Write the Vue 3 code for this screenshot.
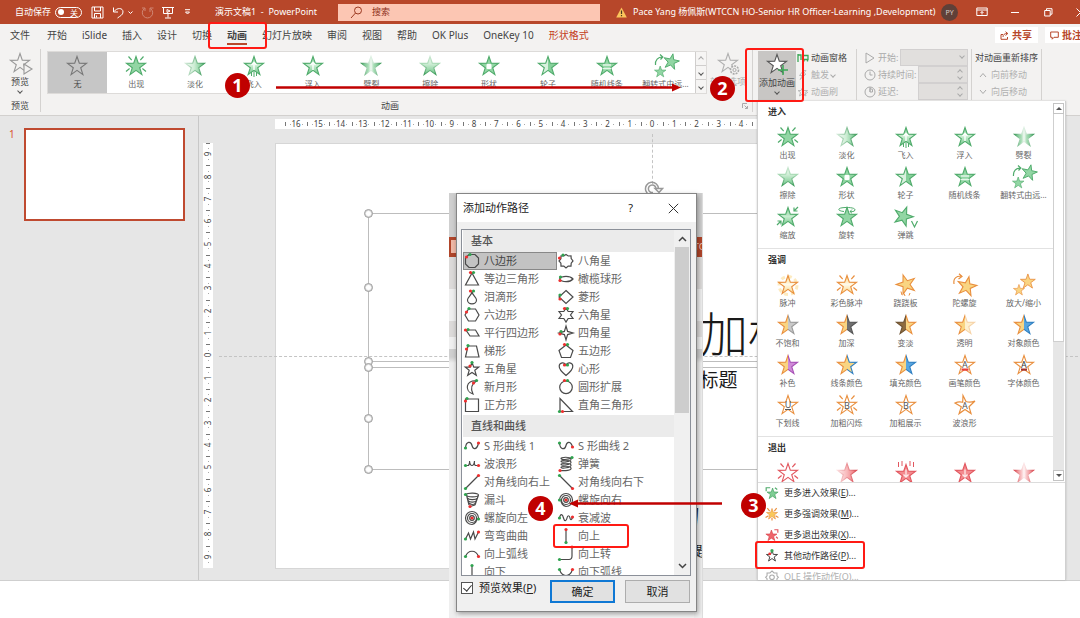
<script setup>
import { h, ref } from 'vue'

const GREEN = '#4fab6b'
const GFILL = '#92d6a4'
const ORANGE = '#e98f3e'
const OFILL = '#f9d582'
const RED = '#e2575f'
const RFILL = '#f38b8f'
const STAR = 'M12 2.5L14.3 9.3L21.5 9.4L15.7 13.7L17.9 20.6L12 16.4L6.1 20.6L8.3 13.7L2.5 9.4L9.7 9.3Z'

const gradients = [
  { id: 'g-fade', x2: 1, y2: 0, stops: [[0, '#f2faf4'], [0.45, '#cfeed6'], [1, '#5fbf7c']] },
  { id: 'g-fade-line', x2: 1, y2: 0, stops: [[0, '#cfe8d5'], [1, '#3f9c5c']] },
  { id: 'g-rise', x2: 0, y2: 1, stops: [[0, '#7fcd94'], [0.5, '#c9edd1'], [1, '#6cc485']] },
  { id: 'g-split', x2: 1, y2: 0, stops: [[0, '#5fbf7c'], [0.35, '#a5dcb3'], [0.5, '#f4faf5'], [0.65, '#a5dcb3'], [1, '#5fbf7c']] },
  { id: 'g-split-line', x2: 1, y2: 0, stops: [[0, '#3f9c5c'], [0.45, '#dcefe1'], [0.55, '#dcefe1'], [1, '#3f9c5c']] },
  { id: 'g-wipe', x2: 0, y2: 1, stops: [[0, '#eaf6ed'], [0.4, '#cfeed6'], [1, '#6cc485']] },
  { id: 'g-wipe-line', x2: 0, y2: 1, stops: [[0, '#c9e6d0'], [0.4, '#a5d8b2'], [1, '#3f9c5c']] },
  { id: 'g-wheel', x2: 1, y2: 0, stops: [[0, '#d9f1df'], [0.5, '#d9f1df'], [0.5, '#85d09a'], [1, '#85d09a']] },
  { id: 'o-glow', x2: 0, y2: 1, stops: [[0, '#f9d582'], [0.5, '#fffaea'], [1, '#f9d582']] },
  { id: 'o-grey', x2: 1, y2: 0, stops: [[0, OFILL], [0.5, OFILL], [0.5, '#c9c9c9'], [1, '#c9c9c9']] },
  { id: 'o-grey-line', x2: 1, y2: 0, stops: [[0, ORANGE], [0.5, ORANGE], [0.5, '#999'], [1, '#999']] },
  { id: 'o-dark', x2: 1, y2: 0, stops: [[0, OFILL], [0.5, OFILL], [0.5, '#707070'], [1, '#707070']] },
  { id: 'o-dark-line', x2: 1, y2: 0, stops: [[0, ORANGE], [0.5, ORANGE], [0.5, '#555'], [1, '#555']] },
  { id: 'o-brown', x2: 1, y2: 0, stops: [[0, '#8f6c3e'], [0.5, '#8f6c3e'], [0.5, OFILL], [1, OFILL]] },
  { id: 'o-brown-line', x2: 1, y2: 0, stops: [[0, '#6d5130'], [0.5, '#6d5130'], [0.5, ORANGE], [1, ORANGE]] },
  { id: 'o-clear', x2: 1, y2: 0, stops: [[0, OFILL], [0.5, OFILL], [0.5, '#fdf0cf'], [1, '#fdf0cf']] },
  { id: 'o-clear-line', x2: 1, y2: 0, stops: [[0, ORANGE], [0.5, ORANGE], [0.5, '#f6d3a8'], [1, '#f6d3a8']] },
  { id: 'o-blue', x2: 1, y2: 0, stops: [[0, OFILL], [0.5, OFILL], [0.5, '#58a6e0'], [1, '#58a6e0']] },
  { id: 'o-blue-line', x2: 1, y2: 0, stops: [[0, ORANGE], [0.5, ORANGE], [0.5, '#2f7fc1'], [1, '#2f7fc1']] },
  { id: 'o-violet', x2: 1, y2: 0, stops: [[0, OFILL], [0.5, OFILL], [0.5, '#cf8ad8'], [1, '#cf8ad8']] },
  { id: 'o-violet-line', x2: 1, y2: 0, stops: [[0, ORANGE], [0.5, ORANGE], [0.5, '#a64fb5'], [1, '#a64fb5']] },
  { id: 'r-fade', x2: 1, y2: 0, stops: [[0, '#fdeeee'], [0.5, '#f8b9bb'], [1, '#ee6c72']] },
  { id: 'r-fade-line', x2: 1, y2: 0, stops: [[0, '#fbdcdd'], [1, '#d94b53']] },
  { id: 'r-split', x2: 1, y2: 0, stops: [[0, '#ee6c72'], [0.35, '#f8c0c2'], [0.5, '#fff6f6'], [0.65, '#f8c0c2'], [1, '#ee6c72']] },
  { id: 'r-split-line', x2: 1, y2: 0, stops: [[0, '#d94b53'], [0.45, '#fbe3e4'], [0.55, '#fbe3e4'], [1, '#d94b53']] },
]

const star = (fill, stroke, transform) =>
  ['path', { d: STAR, fill, stroke, transform, 'stroke-width': 1.1, 'stroke-linejoin': 'miter' }]
const line = (d, stroke, width = 1.2) =>
  ['path', { d, fill: 'none', stroke, 'stroke-width': width }]
const letter = (t, fill = '#555', y = 16) =>
  ['text', { x: 12, y, 'text-anchor': 'middle', 'font-size': 9, 'font-family': 'Noto Sans, sans-serif', fill }, t]

const RAYS = 'M4.5 2.5l3.2 3.6M19.5 2.5l-3.2 3.6M2 17.5l3.6-3M22 17.5l-3.6-3'
const UP = 'M12 16V8.5M9.5 11L12 8.5L14.5 11'
const DOWN = 'M12 8.500V16M9.500 13.500L12 16L14.500 13.500'

const icons = {
  none: [star('none', '#777')],
  appear: [star(GFILL, GREEN), line(RAYS, GREEN)],
  fade: [star('url(#g-fade)', 'url(#g-fade-line)')],
  flyin: [star('url(#g-rise)', GREEN), line(UP, '#fff', 1.4), line('M9.500 18v4M12 17v6M14.500 18v4', GREEN, 1)],
  floatin: [star('url(#g-rise)', GREEN), line(UP, '#fff', 1.4)],
  split: [star('url(#g-split)', 'url(#g-split-line)')],
  wipe: [star('url(#g-wipe)', 'url(#g-wipe-line)')],
  shape: [star(GFILL, GREEN), ['rect', { x: 9.5, y: 10, width: 5, height: 5, rx: 1, fill: '#fff' }]],
  wheel: [star('url(#g-wheel)', GREEN)],
  bars: [star(GFILL, GREEN), line('M8 11h8M8 14.500h8', '#e4f5e8', 1.3)],
  growturn: [
    star(GFILL, GREEN, 'translate(7 -2) rotate(12 12 12) scale(.82)'),
    star(GFILL, GREEN, 'translate(-1 10.500) scale(.6)'),
    line('M1.500 11C1 6 4 3 8.500 3M6 .5L8.800 3L6.500 5.500', GREEN),
  ],
  zoom: [star('url(#g-rise)', GREEN), line('M22 2l-4 4M18 2.500V6h3.500M1 20l4-4M1.500 16H5v3.500', GREEN)],
  swivel: [star(GFILL, GREEN), line('M9 6.500C3 6 2 3.500 7 2.800S20 2.500 20 4.800S16 6.500 15 6.500M17 4.500L15 6.500l2 1.800', GREEN, 1)],
  bounce: [star(GFILL, GREEN, 'translate(-2.500 -1) rotate(20 12 12)'), line('M17.500 16l3 6l3-6', GREEN)],
  pulse: [
    ['circle', { cx: 12, cy: 12.5, r: 9, fill: 'none', stroke: '#fdebc0', 'stroke-width': 3, 'stroke-dasharray': '4 3' }],
    star('url(#o-glow)', ORANGE),
  ],
  colorpulse: [star('url(#o-glow)', ORANGE), line(RAYS, ORANGE)],
  teeter: [star(OFILL, ORANGE, 'translate(0 -1) rotate(-18 12 12)'), line('M7 18.500l1 3.500M10 20.500l1 2.500M16 20l-1 2.500', ORANGE, 1)],
  spin: [star(OFILL, ORANGE, 'translate(2 1) rotate(12 12 12)'), line('M1 11C0 5 4 2.500 9 3.500M6 .8L9 3.500L5.500 6', ORANGE)],
  grow: [star(OFILL, ORANGE, 'translate(6.500 -1) scale(.78)'), star(OFILL, ORANGE, 'translate(0 10) scale(.58)')],
  desaturate: [star('url(#o-grey)', 'url(#o-grey-line)')],
  darken: [star('url(#o-dark)', 'url(#o-dark-line)')],
  lighten: [star('url(#o-brown)', 'url(#o-brown-line)')],
  transparent: [star('url(#o-clear)', 'url(#o-clear-line)')],
  objcolor: [star('url(#o-blue)', 'url(#o-blue-line)')],
  complement: [star('url(#o-violet)', 'url(#o-violet-line)')],
  linecolor: [star(OFILL, 'url(#o-blue-line)')],
  brush: [star('none', ORANGE), letter('A', '#555', 15), ['rect', { x: 8.5, y: 15.5, width: 7, height: 2.2, fill: '#e8403a' }]],
  fontcolor: [star('none', ORANGE), letter('A', '#333', 15), ['rect', { x: 9, y: 15.5, width: 6, height: 2.2, fill: '#a5332c' }]],
  underline: [star('none', ORANGE), letter('U', '#555', 14.5), line('M9 16.500h6', '#555', 1)],
  boldflash: [star('none', ORANGE), line(RAYS, ORANGE), letter('B')],
  boldshow: [star('none', ORANGE), letter('B')],
  wave: [line('M10 2.500L13 8.500Q17 10 22 8L16 13.700L18 20.600L12 16.400L6.100 20.600L8.300 13.700L2 10Q6 8 9.700 9.300Z', ORANGE), letter('A')],
  vanish: [star('none', RED), line(RAYS, RED)],
  rfade: [star('url(#r-fade)', 'url(#r-fade-line)')],
  flyout: [star(RFILL, RED, 'translate(0 1)'), line(DOWN, '#fdeaea', 1.3), line('M4.500 1v5M8 0v5M16 0v5M19.500 1v5', RED, 1)],
  floatout: [star(RFILL, RED), line(DOWN, '#fdeaea', 1.3)],
  rsplit: [star('url(#r-split)', 'url(#r-split-line)')],
  moreIn: [star('#7fcd94', '#3f9c5c', 'translate(1 1)'), line('M2 9V3h7M17 3l4 3', GREEN, 2)],
  moreEmph: [star('#f9c95a', ORANGE), line('M4 2l4 5M20 2l-4 5M1 18l5-3M23 18l-5-3M12 19v4', ORANGE, 2)],
  moreOut: [star('#f0646b', '#d6414a', 'translate(-1 1)'), line('M16 3h6v5M19 15l3 3', RED, 2)],
  path: [
    ['path', { d: STAR, fill: 'none', stroke: '#444', 'stroke-width': 1.7 }],
    ['circle', { cx: 12, cy: 3, r: 2.8, fill: '#3aa655' }],
    ['circle', { cx: 8, cy: 8.5, r: 2.4, fill: '#e33' }],
  ],
  gear: [line('M12 1.500l3.500 3.500h5v5l2.500 2.500-2.500 2.500v5h-5L12 23l-3.500-3h-5v-5L1 12.500l2.500-2.500v-5h5z', '#aaa', 1.8), ['circle', { cx: 12, cy: 12.5, r: 4, fill: 'none', stroke: '#aaa', 'stroke-width': 1.8 }]],
  preview: [star('none', '#999'), ['path', { d: 'M16 13l8 5l-8 5z', fill: '#f3f2f1', stroke: '#999', 'stroke-width': 1.1 }]],
  options: [star('none', '#b0b0b0'), ['circle', { cx: 18.5, cy: 19, r: 4, fill: '#f3f2f1', stroke: '#aaa', 'stroke-width': 1.6, 'stroke-dasharray': '2 1' }], ['circle', { cx: 18.5, cy: 19, r: 1.6, fill: 'none', stroke: '#aaa' }]],
  add: [star('#fff', '#555'), line('M18 13v10M13 18h10', '#3aa655', 1.5)],
}

const EffectIcon = (props) =>
  h('svg', { viewBox: '0 0 24 24', 'aria-hidden': 'true', overflow: 'visible' },
    icons[props.name].map(([tag, attrs, text]) => h(tag, attrs, text)))
EffectIcon.props = ['name']

const tabs = ['文件', '开始', 'iSlide', '插入', '设计', '切换', '动画', '幻灯片放映', '审阅', '视图', '帮助', 'OK Plus', 'OneKey 10', '形状格式']

const entrance = [
  ['appear', '出现'], ['fade', '淡化'], ['flyin', '飞入'], ['floatin', '浮入'], ['split', '劈裂'],
  ['wipe', '擦除'], ['shape', '形状'], ['wheel', '轮子'], ['bars', '随机线条'], ['growturn', '翻转式由远...'],
  ['zoom', '缩放'], ['swivel', '旋转'], ['bounce', '弹跳'],
]
const gallery = [['none', '无'], ...entrance.slice(0, 10)]
const sections = [
  { title: '进入', items: entrance },
  {
    title: '强调',
    items: [
      ['pulse', '脉冲'], ['colorpulse', '彩色脉冲'], ['teeter', '跷跷板'], ['spin', '陀螺旋'], ['grow', '放大/缩小'],
      ['desaturate', '不饱和'], ['darken', '加深'], ['lighten', '变淡'], ['transparent', '透明'], ['objcolor', '对象颜色'],
      ['complement', '补色'], ['linecolor', '线条颜色'], ['objcolor', '填充颜色'], ['brush', '画笔颜色'], ['fontcolor', '字体颜色'],
      ['underline', '下划线'], ['boldflash', '加粗闪烁'], ['boldshow', '加粗展示'], ['wave', '波浪形'],
    ],
  },
  { title: '退出', items: [['vanish', ''], ['rfade', ''], ['flyout', ''], ['floatout', ''], ['rsplit', '']] },
]
const moreItems = [
  ['moreIn', '更多进入效果', 'E'],
  ['moreEmph', '更多强调效果', 'M'],
  ['moreOut', '更多退出效果', 'X'],
  ['path', '其他动作路径', 'P'],
  ['gear', 'OLE 操作动作', 'O'],
]

const hTicks = Array.from({ length: 33 }, (_, i) => Math.abs(i - 16))
const vTicks = Array.from({ length: 19 }, (_, i) => Math.abs(i - 9))

const basic = [
  ['八边形', 'M5 1.500h6L14.500 5v6L11 14.500H5L1.500 11V5Z', [6, 1.5], [2.5, 4]],
  ['八角星', 'M8 1.500l2.200 1.500 2.800-.2.200 2.800L15 8l-1.800 2.200-.2 2.900-2.800-.1L8 15l-2.200-2-2.800.1-.1-2.900L1 8l1.900-2.300.1-2.900 2.800.2z', [5, 2], [1.5, 5]],
  ['等边三角形', 'M8 2L14.500 14H1.500Z', [9.5, 1.5], [6.5, 1.5]],
  ['橄榄球形', 'M1.500 8C4 4.500 12 4.500 15 8C12 11.500 4 11.500 1.500 8Z', [2.5, 6], [2, 9.5]],
  ['泪滴形', 'M8 2.500C8 6 3.500 8 3.500 11a4.500 3.800 0 0 0 9 0C12.500 8 8 6 8 2.500Z', [9.5, 2], [6.5, 2]],
  ['菱形', 'M8 1.500L15 8L8 14.500L1 8Z', [2, 6], [2, 10]],
  ['六边形', 'M4.500 2h7L15 8l-3.500 6h-7L1 8Z', [5, 1.5], [2.5, 5]],
  ['六角星', 'M8 1l2.200 3.500H15L12.500 8l2.500 3.500h-4.800L8 15l-2.200-3.500H1L3.500 8L1 4.500h4.800Z', [9.5, 1.5], [6.5, 1.5]],
  ['平行四边形', 'M2 5h9.500L15 11H6Z', [4, 4.5], [1.5, 5]],
  ['四角星', 'M8 1l1.600 5.400L15 8l-5.400 1.600L8 15l-1.600-5.400L1 8l5.400-1.600Z', [3, 6.5], [2, 9]],
  ['梯形', 'M4 3h8.500l2.500 11H1.500Z', [4, 2.5], [2.5, 6]],
  ['五边形', 'M8 2l7 5.500-2.500 7h-9L1 7.500Z', [9.5, 1.5], [6.5, 1.5]],
  ['五角星', 'M8 1.500l1.800 4.700h4.900l-3.900 3.100 1.500 5L8 11.500l-4.300 2.800 1.500-5L1.300 6.200h4.900Z', [8, 1.5], [6, 5]],
  ['心形', 'M8 14.500C3 10.500 1 8 1.200 5C1.500 1.500 6.500.5 8 4C9.500.5 14.500 1.500 14.800 5C15 8 13 10.500 8 14.500Z', [9.5, 4], [6.5, 4]],
  ['新月形', 'M12.500 2C2 .5 0 12 9 15C6.500 10 7.500 5 12.500 2Z', [12.5, 1.5], [9.5, 4]],
  ['圆形扩展', 'M8 2a6.300 6.300 0 1 1 0 12.600A6.300 6.300 0 0 1 8 2Z', [9.5, 1.5], [6.5, 1.5]],
  ['正方形', 'M1.500 2h13v12.500h-13Z', [3, 1.5], [1.5, 4]],
  ['直角三角形', 'M2 1.500V14.500H14.500Z', [1.5, 14.5], [4.5, 14.5]],
]
const curves = [
  ['S 形曲线 1', 'M1.500 10C2 3 7 3 8 7.500S13 12 14.500 5', [1.5, 10], [14.500, 5]],
  ['S 形曲线 2', 'M1.500 5C2 12 7 12 8 7.500S13 3 14.500 9', [1.5, 5], [14.5, 9]],
  ['波浪形', 'M1.500 9.500H4.500Q6 8 5.500 5Q6 9.500 8 9.500T10.500 5Q10 9 11.500 9.500H14.500', [1.5, 9.5], [14.5, 9.5]],
  ['弹簧', 'M14 1.500C10 4 3 4 3 2.500S12 .5 13 3S3 7 3 5.500S12 3.500 13 6S3 10 3 8.500S12 6.500 13 9S3 13 3 11.500S12 9.500 13 12S7 15 2 14.500', [14, 1.5], [2, 14.5]],
  ['对角线向右上', 'M1.500 14.500L14.500 1.500', [1.5, 14.5], [14.5, 1.5]],
  ['对角线向右下', 'M1.500 1.500L14.500 14.500', [1.5, 1.5], [14.5, 14.5]],
  ['漏斗', 'M1.500 2.500C4 .5 14 .5 14.500 3C14 5.500 3 5.500 2.500 3L5 13M14.500 3L11 13M3.500 6C5 8.500 12 8 13.500 6M4 8.500C6 11 11 10.500 12.500 8.500M5 11C7 13 10 13 11.500 11M11 13L6 14.500', [1.5, 2.5], [6, 14.5]],
  ['螺旋向右', 'M1.500 8A6.500 6.500 0 1 1 8 14.500A6 6 0 0 1 3 8M8 3.500A4.500 4.500 0 1 1 3.500 8A4.500 4.500 0 0 1 8 3.500M8 5.700A2.300 2.300 0 1 1 5.700 8A2.300 2.300 0 0 1 8 5.700', [1.5, 8], [8, 8]],
  ['螺旋向左', 'M14.500 8A6.500 6.500 0 1 0 8 14.500A6 6 0 0 0 13 8M8 3.500A4.500 4.500 0 1 1 3.500 8A4.500 4.500 0 0 1 8 3.500M8 5.700A2.300 2.300 0 1 1 5.700 8A2.300 2.300 0 0 1 8 5.700', [14.5, 9], [8, 8]],
  ['衰减波', 'M1.500 8C2.500 3 4.500 4 5.500 8S8.500 11 9 8S11.500 5 12 8S14 9 14.500 7.500', [1.5, 8], [14.5, 7]],
  ['弯弯曲曲', 'M1.500 11L4.500 5L6.500 11L9.500 4L11 11L14.500 4', [1.5, 11], [14.5, 4]],
  ['向上', 'M8 15V1', [8, 14.5], [8, 1.5]],
  ['向上弧线', 'M1.500 10.500C4 3.500 12 3.500 14.500 10.500', [1.5, 10.5], [14.5, 10.5]],
  ['向上转', 'M1.500 13.500H11Q14 13.500 14 10V1', [1.5, 13.5], [14, 1]],
  ['向下', 'M8 1V15', [8, 1.5], [8, 14.5]],
  ['向下弧线', 'M1.500 5.500C4 13.500 12 13.500 14.500 5.500', [1.5, 5.5], [14.5, 5.5]],
]
const groups = [{ title: '基本', items: basic }, { title: '直线和曲线', items: curves }]
const selected = ref('八边形')
const previewOn = ref(true)
</script>

<template>
  <div class="page">
    <svg class="defs" aria-hidden="true">
      <defs>
        <linearGradient v-for="g in gradients" :id="g.id" :key="g.id" x1="0" y1="0" :x2="g.x2" :y2="g.y2">
          <stop v-for="(s, i) in g.stops" :key="i" :offset="s[0]" :stop-color="s[1]" />
        </linearGradient>
      </defs>
    </svg>

    <div class="window">
      <header class="titlebar">
        <div class="quick">
          <span>自动保存</span>
          <button class="toggle" type="button"><i></i>关</button>
          <svg class="q-save" width="13" height="13" viewBox="0 0 13 13"><path d="M1 1h11v11H1zM3.500 1v4h6V1M3.500 12V7.500h6V12M5.500 9.500v2" /></svg>
          <svg class="q-undo" width="13" height="13" viewBox="0 0 13 13"><path d="M1.500 1.500v4.500h4.500M2 5.500C5 1.500 11 1.500 11 6C11 9 8 10 5.500 12" /></svg>
          <svg class="q-chev" width="5" height="5" viewBox="0 0 5 5"><path d="M.5 1.500l2 2l2-2" /></svg>
          <svg class="q-redo" width="13" height="13" viewBox="0 0 13 13"><path d="M3.500 2.500A5.200 5.200 0 1 0 9.500 2.500M9 6V2h3.500M1 2h3v3" /></svg>
          <svg class="q-show" width="13" height="13" viewBox="0 0 13 13"><path d="M0 1.500h12M1.500 1.500V7.500h9v-6M6 7.500V11.500M3 12h6M5 3.500l3 1.500-3 1.500z" /></svg>
          <svg class="q-more" width="7" height="6" viewBox="0 0 7 6"><path d="M1 .7h5M1.500 3l2 2l2-2z" /></svg>
          <span class="doc">演示文稿1&nbsp; -&nbsp; PowerPoint</span>
        </div>
        <label class="search">
          <svg width="13" height="13" viewBox="0 0 13 13"><circle cx="8" cy="4.500" r="3.500" /><path d="M5.500 7L1 12" /></svg>
          <input type="text" placeholder="搜索" aria-label="搜索" />
        </label>
        <div class="account">
          <svg class="warn" width="11" height="11" viewBox="0 0 11 11"><path d="M5.500 .5L10.800 10.500H.2Z" fill="#fbc55c" /><path d="M5.500 3.500V7M5.500 8v1.300" stroke="#4a3a20" stroke-width="1.200" /></svg>
          <span class="user">Pace Yang 杨佩斯(WTCCN HO-Senior HR Officer-Learning ,Development)</span>
          <span class="avatar">PY</span>
          <svg class="w-opt" width="12" height="10" viewBox="0 0 12 10"><path d="M.8 1h10.400v7.500H.8zM.8 3h10.400M6 7.500V4.500M4.500 6L6 4.500L7.500 6" /></svg>
          <svg class="w-min" width="8" height="10" viewBox="0 0 8 10"><path d="M0 5.500h8" /></svg>
          <svg class="w-max" width="9" height="9" viewBox="0 0 9 9"><path d="M.7 2.500h5.500V8H.7zM2.500 2.500V.7h5.500v5.500H6.200" /></svg>
          <svg class="w-close" width="9" height="9" viewBox="0 0 9 9"><path d="M.5 .5l8 8M8.500 .5l-8 8" /></svg>
        </div>
      </header>

      <nav class="tabs">
        <a v-for="t in tabs" :key="t" href="#" :class="{ active: t === '动画', context: t === '形状格式' }">{{ t }}</a>
        <span class="grow"></span>
        <button class="pill" type="button">
          <svg width="9" height="9" viewBox="0 0 9 9"><path d="M3 3.500H1V8.300h6.500V6M3 6C3 3.500 4.500 2.500 7.500 2.500M5.500 .7L7.800 2.500L5.500 4.500" /></svg>共享
        </button>
        <button class="pill" type="button">
          <svg width="9" height="9" viewBox="0 0 9 9"><path d="M.7 1h7.600v5.300H4L2.200 8.200V6.300H.7z" /></svg>批注
        </button>
      </nav>

      <section class="ribbon">
        <div class="group g-preview">
          <button class="big" type="button">
            <EffectIcon name="preview" class="i24" /><span>预览</span><i class="chev"></i>
          </button>
          <span class="caption">预览</span>
        </div>

        <div class="group g-anim">
          <div class="anim-row">
            <div class="gallery">
              <button v-for="(g, i) in gallery" :key="g[1]" type="button" class="effect" :class="{ on: i === 0 }">
                <EffectIcon :name="g[0]" class="i24" /><span>{{ g[1] }}</span>
              </button>
              <div class="steps">
                <button type="button" aria-label="上一行"><i class="chev up pale"></i></button>
                <button type="button" aria-label="下一行"><i class="chev"></i></button>
                <button type="button" aria-label="更多" class="all"><i class="chev"></i></button>
              </div>
            </div>
            <button class="big off" type="button"><EffectIcon name="options" class="i24" /><span>效果选项</span></button>
          </div>
          <span class="caption">动画</span>
          <svg class="launcher" width="6" height="6" viewBox="0 0 6 6"><path d="M.5 5V.5H5M2.500 2.500l3 3M5.500 3v2.500H3" /></svg>
        </div>

        <div class="group g-add">
          <button class="big pressed" type="button"><EffectIcon name="add" class="i24" /><span>添加动画</span><i class="chev"></i></button>
          <div class="rows">
            <button type="button"><svg width="12" height="10" viewBox="0 0 12 10"><path d="M1 1v8M1 2h3v5M6 2.500h5v4H6zM7 6.500v2M10.500 6.500v2" stroke="#3aa655" stroke-width="1.300" /></svg>动画窗格</button>
            <button type="button" class="off"><svg width="12" height="10" viewBox="0 0 12 10"><path d="M6.500 .5L2.500 5.500h3L3 9.500L9 4H6L9 .5z" stroke="#bbb" /></svg>触发<i class="chev pale"></i></button>
            <button type="button" class="off"><svg width="12" height="10" viewBox="0 0 12 10"><path d="M1 3.500h3L5.500 .5L7 3.500h3.500L8 5.500l1 3.500-3.500-2L2.500 9l1-3.500zM7 8l4-3" stroke="#bbb" /></svg>动画刷</button>
          </div>
        </div>

        <div class="group g-time">
          <label class="field"><svg width="10" height="12" viewBox="0 0 10 12"><path d="M1 1l8 5l-8 5z" /></svg>开始:
            <select disabled class="start"><option></option></select><i class="chev pale over"></i></label>
          <label class="field"><svg width="12" height="12" viewBox="0 0 12 12"><circle cx="6" cy="6" r="5" /><path d="M6 2.500V6h2.500" /></svg>持续时间:
            <input disabled type="text" /><i class="spin"></i></label>
          <label class="field"><svg width="12" height="12" viewBox="0 0 12 12"><circle cx="6" cy="6" r="5" /><path d="M6 2.500V6h2.500V3.500zM6 1v5" /></svg><span class="wide">延迟:</span>
            <input disabled type="text" /><i class="spin"></i></label>
        </div>

        <div class="group g-order">
          <span>对动画重新排序</span>
          <button type="button" class="off"><svg width="8" height="6" viewBox="0 0 8 6"><path d="M1 5l3-3.500L7 5" /></svg>向前移动</button>
          <button type="button" class="off"><svg width="8" height="6" viewBox="0 0 8 6"><path d="M1 1l3 3.500L7 1" /></svg>向后移动</button>
        </div>
      </section>

      <main class="workspace">
        <aside class="slides">
          <span>1</span>
          <button class="thumb" type="button" aria-label="幻灯片 1"></button>
        </aside>
        <div class="vruler"><span v-for="(n, i) in vTicks" :key="i"><b>{{ n }}</b></span></div>
        <div class="canvas">
          <div class="hruler"><span v-for="(n, i) in hTicks" :key="i">{{ n }}</span></div>
          <div class="slide">
            <i class="guide-h"></i>
            <i class="guide-v"></i>
            <svg class="rotate" width="20" height="16" viewBox="0 0 20 16"><path d="M14.500 8A6.500 6.500 0 1 0 11 13.500M12 8A3.800 3.800 0 1 0 9 11.500M11 7.500h7.500L15 11.500z" /></svg>
            <div class="shape title"><p>单击此处添加标题</p><i class="dot tl"></i><i class="dot ml"></i><i class="dot bl"></i></div>
            <div class="shape subtitle"><p>单击此处添加副标题</p><i class="dot tl"></i><i class="dot ml"></i><i class="dot bl"></i></div>
          </div>
        </div>
      </main>
    </div>

    <div class="menu">
      <div class="menu-scroll">
        <div class="sections">
          <section v-for="s in sections" :key="s.title">
            <h3>{{ s.title }}</h3>
            <div class="grid">
              <button v-for="e in s.items" :key="e[0] + e[1]" type="button" class="effect">
                <EffectIcon :name="e[0]" class="i24" /><span>{{ e[1] }}</span>
              </button>
            </div>
          </section>
        </div>
        <div class="bar">
          <button type="button" aria-label="向上滚动"><i class="tri up"></i></button>
          <div class="track"><i></i></div>
          <button type="button" aria-label="向下滚动"><i class="tri"></i></button>
        </div>
      </div>
      <button v-for="m in moreItems" :key="m[1]" type="button" class="more" :class="{ off: m[2] === 'O' }">
        <EffectIcon :name="m[0]" class="i14" /><span>{{ m[1] }}(<u>{{ m[2] }}</u>)...</span>
      </button>
    </div>

    <div class="behind">
      <div class="strip left"><i class="band"></i><i class="field-end"></i></div>
      <div class="strip right"><i class="band">TC</i><span class="big-char">力</span><span class="small-char">题</span></div>
    </div>

    <div class="dialog" role="dialog" aria-label="添加动作路径">
      <header>
        <h2>添加动作路径</h2>
        <button type="button">?</button>
        <button type="button" aria-label="关闭"><svg width="11" height="11" viewBox="0 0 11 11"><path d="M.8 .8l9.400 9.400M10.200 .8L.8 10.200" /></svg></button>
      </header>
      <div class="list">
        <div class="list-body">
          <section v-for="g in groups" :key="g.title">
            <h3>{{ g.title }}</h3>
            <div class="pairs">
              <button v-for="p in g.items" :key="p[0]" type="button" :class="{ on: p[0] === selected }" @click="selected = p[0]">
                <svg width="16" height="16" viewBox="0 0 16 16">
                  <path :d="p[1]" />
                  <circle :cx="p[2][0]" :cy="p[2][1]" r="1.600" fill="#2fa34f" />
                  <circle :cx="p[3][0]" :cy="p[3][1]" r="1.600" fill="#ee2f2f" />
                </svg>{{ p[0] }}
              </button>
            </div>
          </section>
        </div>
        <div class="list-bar">
          <svg width="9" height="6" viewBox="0 0 9 6"><path d="M1 5l3.500-3.500L8 5" /></svg>
          <i></i>
          <svg width="9" height="6" viewBox="0 0 9 6"><path d="M1 1l3.500 3.500L8 1" /></svg>
        </div>
      </div>
      <footer>
        <label><input v-model="previewOn" type="checkbox" /><span>预览效果(<u>P</u>)</span></label>
        <button type="button" class="ok">确定</button>
        <button type="button">取消</button>
      </footer>
    </div>

    <div class="notes">
      <i class="box b1"></i><i class="box b2"></i><i class="box b3"></i><i class="box b4"></i>
      <svg class="arrow a1" width="405" height="9" viewBox="0 0 405 9"><path d="M0 4.500h398" stroke="#c00000" stroke-width="2.500" /><path d="M396 .5l9 4l-9 4z" fill="#c00000" /></svg>
      <svg class="arrow a2" width="153" height="9" viewBox="0 0 153 9"><path d="M7 4.500h146" stroke="#c00000" stroke-width="2.500" /><path d="M9 .5L0 4.500l9 4z" fill="#c00000" /></svg>
      <b class="num n1">1</b><b class="num n2">2</b><b class="num n3">3</b><b class="num n4">4</b>
    </div>
  </div>
</template>

<style>
html, body { background: #fff; }
</style>

<style scoped>
* { box-sizing: border-box; }
.page {
  position: relative;
  min-height: 100vh;
  overflow: hidden;
  font: 9px/12px "Noto Sans", "Noto Sans CJK SC", sans-serif;
  color: #444;
}
.defs { position: absolute; width: 0; height: 0; }
button { font: inherit; color: inherit; border: 0; padding: 0; background: none; cursor: pointer; }
input, select { font: inherit; border: 0; margin: 0; }
svg { flex: none; display: block; }
i { display: block; font-style: normal; }
h2, h3, p { margin: 0; font: inherit; }
.grow { flex: 1; }
.off { color: #b0b0b0; }
.i24 { width: 24px; height: 24px; }
.i14 { width: 14px; height: 14px; }
.chev { width: 4px; height: 4px; border: solid #555; border-width: 0 1px 1px 0; transform: rotate(45deg); }
.chev.up { transform: rotate(225deg); }
.chev.pale { border-color: #aaa; }

.window { border-bottom: 1px solid #cfcfcf; }

.titlebar { display: flex; align-items: center; height: 24px; background: #b7472a; color: #fff; }
.titlebar svg { fill: none; stroke: #fff; stroke-width: 1; }
.titlebar svg.warn { stroke: none; }
.quick { display: flex; align-items: center; flex: none; width: 338px; padding-left: 15px; white-space: nowrap; }
.toggle { display: flex; align-items: center; justify-content: space-between; width: 27px; height: 11px; margin: 0 9px 0 4px; padding: 0 3px 0 2px; border: 1px solid #fff; border-radius: 6px; font-size: 8px; line-height: 9px; }
.toggle i { width: 6px; height: 6px; border-radius: 50%; background: #fff; }
.q-undo { margin-left: 8px; }
.q-chev { margin-left: 3px; }
.q-redo { margin-left: 8px; opacity: .35; }
.q-show { margin-left: 8px; }
.q-more { margin-left: 9px; }
.doc { margin-left: 24px; }
.search { display: flex; align-items: center; flex: 1; height: 17px; padding-left: 12px; gap: 9px; background: #fcc6b3; }
.titlebar .search svg { stroke: #9c3a22; }
.search input { flex: 1; min-width: 0; padding: 0; background: none; outline: 0; }
.search input::placeholder { color: #8c2f1a; opacity: 1; }
.account { display: flex; align-items: center; flex: none; width: 480px; padding-left: 16px; white-space: nowrap; overflow: hidden; }
.user { width: 301px; margin-left: 6px; }
.avatar { flex: none; width: 17px; height: 17px; margin-left: 7px; border-radius: 50%; background: #5f4038; color: #d9cfca; font-size: 7px; line-height: 17px; text-align: center; }
.w-opt { margin-left: 18px; }
.w-min { margin-left: 23px; }
.w-max { margin-left: 25px; }
.w-close { margin-left: 23px; }

.tabs { display: flex; align-items: flex-start; height: 24px; padding-left: 10px; gap: 15px; background: #f3f2f1; font-size: 10px; overflow: hidden; white-space: nowrap; }
.tabs a { padding: 4px 0 3px; line-height: 14px; color: #444; text-decoration: none; }
.tabs a:first-child { margin-right: 2px; }
.tabs a.active { font-weight: 700; border-bottom: 2px solid #b7472a; padding-bottom: 1px; }
.tabs a.context { color: #c43e1c; }
.pill { display: flex; align-items: center; flex: none; gap: 3px; height: 16px; margin-top: 3px; padding: 0 6px 0 5px; background: #fff; color: #b7472a; font-weight: 700; font-size: 10px; }
.pill:last-child { margin: 3px -8px 0 -8px; }
.pill svg { fill: none; stroke: #b7472a; }

.ribbon { display: flex; height: 68px; padding-right: 38px; background: #f3f2f1; border-bottom: 1px solid #d2d0ce; white-space: nowrap; }
.group { position: relative; display: flex; flex: none; margin: 1px 0 3px; border-right: 1px solid #d4d2d0; }
.big { display: flex; flex-direction: column; align-items: center; flex: none; gap: 0; }
.big .i24 { margin-top: 2px; }
.big .chev { margin-top: 1px; }
.big span { line-height: 13px; }
.caption { line-height: 12px; text-align: center; }
.g-preview { flex-direction: column; justify-content: space-between; width: 41px; }
.g-anim { flex: 1; flex-direction: column; justify-content: space-between; padding: 0 3px 0 6px; }
.g-anim .caption { padding-right: 16px; }
.anim-row { display: flex; padding-top: 2px; }
.anim-row > .big { width: 42px; margin-top: -2px; }
.gallery { display: flex; flex: 1; height: 43px; border: 1px solid #dddbd9; background: #fff; }
.effect { display: flex; flex-direction: column; align-items: center; flex: 1 1 0; min-width: 0; padding-top: 2px; font-size: 8px; line-height: 11px; color: #666; white-space: nowrap; }
.effect span { min-height: 11px; }
.effect.on { background: #c6c6c6; color: #444; }
.steps { display: flex; flex-direction: column; flex: none; width: 11px; }
.steps button { flex: 1; display: grid; place-items: center; border: solid #d0cecd; border-width: 0 0 1px 1px; background: #f6f5f4; }
.steps button.all { border-bottom: 0; }
.launcher { position: absolute; right: 4px; bottom: 3px; fill: none; stroke: #aaa; }
.g-add { padding-left: 5px; width: 104px; margin-bottom: 15px; }
.big.pressed { width: 38px; height: 51px; margin-top: 2px; background: #c8c6c4; }
.big.pressed .i24 { margin-top: 1px; }
.rows, .g-order { display: flex; flex-direction: column; line-height: 17px; }
.rows { flex: 1; padding-left: 1px; }
.rows button, .g-order button { display: flex; align-items: center; height: 17px; gap: 2px; }
.rows button svg { fill: none; }
.g-time { flex-direction: column; width: 115px; padding-left: 7px; margin-bottom: 15px; }
.field { position: relative; display: flex; align-items: center; gap: 2px; height: 17px; padding-right: 3px; color: #aaa; }
.field > svg { width: 12px; fill: none; stroke: #aaa; }
.field input, .field select { flex: 1; min-width: 0; height: 17px; padding: 0; border: 1px solid #d2d0d0; background: #e1dfdd; appearance: none; border-radius: 0; opacity: 1; }
.wide { width: 38px; }
.over { position: absolute; right: 7px; top: 5px; }
.spin { position: absolute; right: 8px; top: 3px; width: 5px; height: 11px; }
.spin::before, .spin::after { content: ""; position: absolute; left: 0; width: 3px; height: 3px; border: solid #aaa; border-width: 1px 0 0 1px; transform: rotate(45deg); }
.spin::before { top: 1px; }
.spin::after { bottom: 1px; transform: rotate(225deg); }
.g-order { width: 70px; padding-left: 3px; margin-bottom: 15px; }
.g-order button { padding-left: 4px; gap: 4px; }
.g-order svg { fill: none; stroke: #aaa; }

.workspace { display: flex; min-height: 464px; background: #e6e6e6; }
.slides { display: flex; align-items: flex-start; flex: none; width: 199px; padding: 12px 0 0 9px; gap: 9px; border-right: 1px solid #c8c8c8; color: #d9532f; font-size: 10px; }
.thumb { width: 161px; height: 93px; border: 2px solid #bf4a30; background: #fff; }
.vruler { display: grid; grid-auto-rows: 1fr; flex: none; width: 10px; height: 425px; margin: 27px 0 0 4px; background: #fff; }
.vruler span { display: grid; place-items: center; font-size: 8px; line-height: 8px;
  background:
    linear-gradient(#777, #777) 50% 0 / 4px 1px no-repeat,
    linear-gradient(#aaa, #aaa) 50% 25% / 1px 1px no-repeat,
    linear-gradient(#aaa, #aaa) 50% 75% / 1px 1px no-repeat;
}
.vruler b { font-weight: 400; transform: rotate(-90deg); }
.canvas { flex: 1; min-width: 0; margin: 3px 51px 0 62px; }
.hruler { display: grid; grid-auto-flow: column; grid-auto-columns: 1fr; height: 10px; padding: 0 10px; background: #fff; }
.hruler span { text-align: center; font-size: 8px; line-height: 10px;
  background:
    linear-gradient(#777, #777) 0 50% / 1px 4px no-repeat,
    linear-gradient(#aaa, #aaa) 22% 50% / 1px 1px no-repeat,
    linear-gradient(#aaa, #aaa) 78% 50% / 1px 1px no-repeat;
}
.slide { position: relative; aspect-ratio: 754 / 426; margin-top: 14px; background: #fff; border: 1px solid #d6d6d6; }
.guide-h { position: absolute; top: 50%; left: -57px; right: -60px; border-top: 1px dashed #c4c4c4; }
.guide-v { position: absolute; left: 50%; top: -10px; height: 50px; border-left: 1px dashed #c4c4c4; }
.rotate { position: absolute; left: 49%; top: 37px; fill: none; stroke: #999; stroke-width: 1.500; }
.shape { position: absolute; left: 12.300%; right: 12.300%; border: 1px solid #bdbdbd; text-align: center; color: #1a1a1a; white-space: nowrap; }
.shape p { font-family: "Noto Sans CJK SC", sans-serif; }
.title { top: 16.200%; height: 35.200%; display: flex; align-items: flex-end; justify-content: center; font-size: 48px; line-height: 60px; font-weight: 300; }
.subtitle { top: 52.500%; height: 24.400%; font-size: 19px; line-height: 22px; }
.dot { position: absolute; left: -5px; width: 9px; height: 9px; border: 1px solid #999; border-radius: 50%; background: #fff; box-shadow: inset 0 0 0 1px #d8d8d8; }
.tl { top: -5px; }
.ml { top: calc(50% - 4px); }
.bl { bottom: -5px; }

.menu { position: absolute; top: 101px; right: 14px; width: 309px; height: 479px; overflow: hidden; background: #fff; border: solid #d0d0d0; border-width: 0 1px; box-shadow: 0 0 2px rgba(0, 0, 0, .2); }
.menu-scroll { display: flex; height: 382px; border-bottom: 1px solid #dcdcdc; }
.sections { flex: 1; overflow: hidden; }
.sections section { padding-bottom: 5px; border-bottom: 1px solid #e2e2e2; }
.sections h3 { height: 22px; padding-left: 10px; line-height: 22px; font-weight: 700; color: #333; }
.grid { display: grid; grid-template-columns: repeat(5, 1fr); }
.grid .effect { height: 40px; }
.bar { display: flex; flex-direction: column; flex: none; width: 12px; padding: 2px 0 1px; }
.bar button { display: grid; place-items: center; width: 11px; height: 11px; border: 1px solid #c4c4c4; background: #fff; }
.tri { border: solid transparent; border-width: 3px 3px 0; border-top-color: #555; }
.tri.up { border-width: 0 3px 3px; border-bottom-color: #555; }
.track { flex: 1; width: 11px; background: #e6e6e6; }
.track i { height: 64%; background: #fff; border: solid #cfcfcf; border-width: 0 1px 1px; }
.more { display: flex; align-items: center; width: 100%; height: 21px; padding: 0 0 2px 7px; gap: 5px; color: #333; }
.more.off { color: #b0b0b0; }

.behind { position: absolute; left: 449px; top: 193px; width: 254px; height: 425px; display: flex; justify-content: space-between; background: #f4f4f4; border-right: 1px solid #dedede; }
.strip { position: relative; width: 8px; overflow: hidden; background: linear-gradient(#cfcfcf 0 44px, #dcdad9 64px 96px, #efefef 96px 128px, #dcdad9 128px 144px, #f0f0f0 144px 156px, #cfcfcf 156px 164px, #efefef 170px); }
.band { position: absolute; top: 44px; left: 0; right: 0; height: 20px; background: #b0452a; color: #f0c8bc; line-height: 20px; }
.field-end { position: absolute; top: 47px; left: 2px; right: 0; height: 13px; background: #f0b9a6; }
.big-char, .small-char { position: absolute; color: #222; font-family: "Noto Sans CJK SC", sans-serif; }
.big-char { right: 1px; top: 302px; font-size: 30px; line-height: 36px; font-weight: 300; }
.small-char { left: 1px; top: 348px; font-size: 14px; line-height: 18px; }

.dialog { position: absolute; left: 456px; top: 193px; width: 241px; border: 1px solid #858585; background: #f0f0f0; box-shadow: 1px 2px 5px rgba(0, 0, 0, .35); font-size: 11px; line-height: 16px; color: #222; }
.dialog header { display: flex; align-items: center; height: 28px; padding: 0 17px 0 6px; background: #fff; }
.dialog h2 { flex: 1; }
.dialog header svg { margin-left: 35px; stroke: #333; }
.list { display: flex; height: 347px; margin: 7px 5px 0 4px; border: 1px solid #8b9099; background: #fff; }
.list-body { flex: 1; overflow: hidden; padding-left: 1px; }
.list h3 { height: 22px; padding-left: 8px; line-height: 22px; background: #ebebeb; font-weight: 500; color: #555; }
.list section { padding-bottom: 1px; }
.pairs { display: grid; grid-template-columns: 94px 1fr; }
.pairs button { display: flex; align-items: center; height: 18px; padding-left: 0; gap: 4px; border: 1px solid transparent; color: #666; white-space: nowrap; }
.pairs button.on { background: #c3c3c3; border-color: #888; color: #444; }
.pairs svg { fill: none; overflow: visible; }
.pairs path { stroke: #4a4a4a; stroke-width: 1.200; }
.list-bar { display: flex; flex-direction: column; align-items: center; flex: none; width: 16px; padding: 6px 0; background: #f0f0f0; }
.list-bar svg { fill: none; stroke: #444; stroke-width: 1.500; }
.list-bar i { width: 14px; height: 166px; margin: 5px 0 auto; background: #cdcdcd; }
.dialog footer { display: flex; gap: 10px; padding: 4px 6px 8px 4px; }
.dialog footer label { display: flex; align-items: center; flex: 1; height: 16px; gap: 6px; white-space: nowrap; }
.dialog footer input { appearance: none; position: relative; width: 12px; height: 12px; border: 1px solid #555; background: #fff; }
.dialog footer input:checked::after { content: ""; position: absolute; left: 3px; top: 0; width: 4px; height: 7px; border: solid #333; border-width: 0 1px 1px 0; transform: rotate(40deg); }
.dialog footer button { width: 65px; height: 23px; border: 1px solid #adadad; background: #e1e1e1; }
.dialog footer button.ok { border: 2px solid #0f78d4; }

.notes { position: absolute; inset: 0; pointer-events: none; }
.notes > * { position: absolute; }
.box { border: 2px solid #ff1a14; border-radius: 3px; }
.b1 { left: 208px; top: 22px; width: 59px; height: 27px; }
.b2 { left: 745px; top: 48px; width: 59px; height: 54px; }
.b3 { left: 755px; top: 541px; width: 110px; height: 28px; }
.b4 { left: 553px; top: 524px; width: 76px; height: 24px; }
.a1 { left: 276px; top: 83px; }
.a2 { left: 569px; top: 499px; }
.num { width: 25px; height: 25px; border-radius: 50%; background: #c00000; color: #fff; font-size: 18px; line-height: 25px; text-align: center; }
.n1 { left: 225px; top: 73px; }
.n2 { left: 710px; top: 76px; }
.n3 { left: 741px; top: 493px; }
.n4 { left: 528px; top: 496px; }
</style>
